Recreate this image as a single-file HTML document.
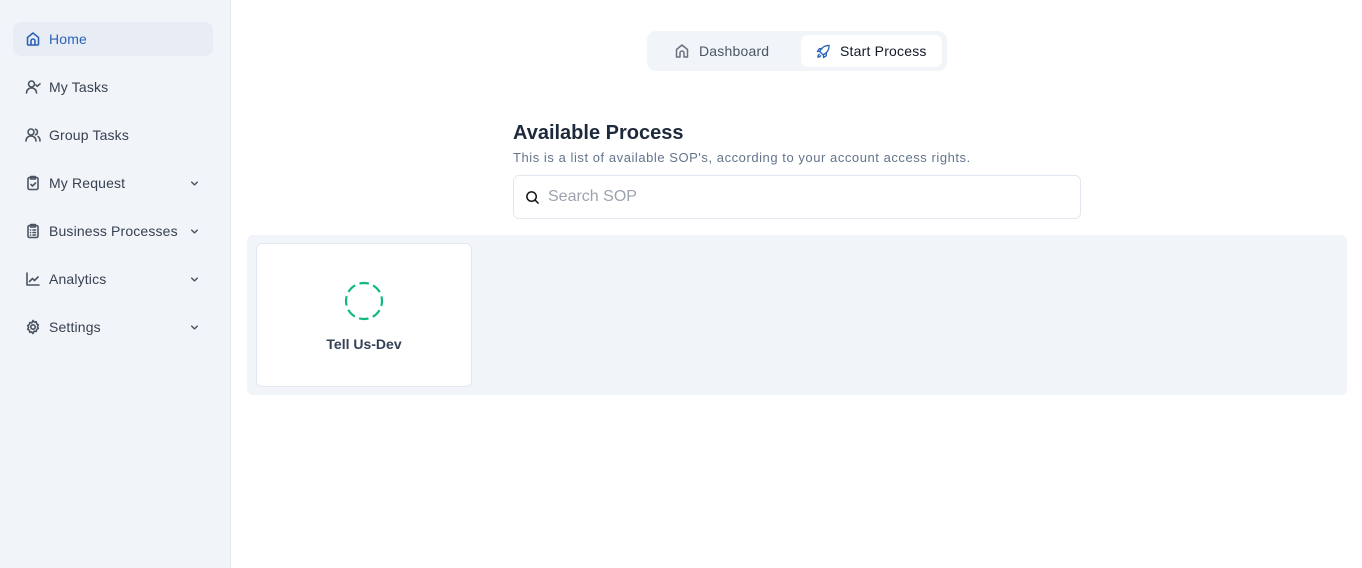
<!DOCTYPE html>
<html><head><style>
*{box-sizing:border-box;margin:0;padding:0}
body{width:1362px;height:568px;background:#fff;font-family:"Liberation Sans",sans-serif;position:relative;overflow:hidden}
.sb{position:absolute;left:0;top:0;width:231px;height:568px;background:#f1f4f9;border-right:1px solid #e2e8f0}
.it{position:absolute;left:13px;width:200px;height:34px;border-radius:8px;display:flex;align-items:center;padding-left:12px;font-size:14px;color:#374151;font-weight:500;letter-spacing:.15px}
.it svg{width:16px;height:16px;margin-right:8px;fill:none;stroke:#4b5563;stroke-width:1.6;stroke-linecap:round;stroke-linejoin:round}
.it.act{background:#e8edf5;color:#2b62b8}
.it.act svg{stroke:#2b62b8}
.it svg.chev{position:absolute;left:177px;top:13px;width:9px;height:9px;margin:0;stroke-width:1.3}
.abs{position:absolute}
</style></head><body>
<div class="sb">
<div class="it act" style="top:22px"><svg viewBox="0 0 16 16"><path d="M2.5 6.5L8 2l5.5 4.5V13a1 1 0 0 1-1 1h-9a1 1 0 0 1-1-1z"/><path d="M6 14v-4a2 2 0 0 1 4 0v4"/></svg>Home</div>
<div class="it" style="top:70px"><svg viewBox="0 0 16 16"><circle cx="6.5" cy="5" r="3"/><path d="M1.5 14c0-3 2.2-5 5-5s5 2 5 5"/><path d="M11 6l1.3 1.3L15 4.8"/></svg>My Tasks</div>
<div class="it" style="top:118px"><svg viewBox="0 0 16 16"><circle cx="6" cy="5" r="3"/><path d="M1 14c0-3 2.2-5 5-5s5 2 5 5"/><path d="M10.5 2.2a3 3 0 0 1 0 5.6M13 9.5c1.3.8 2 2.5 2 4.5"/></svg>Group Tasks</div>
<div class="it" style="top:166px"><svg viewBox="0 0 16 16"><rect x="3" y="2.5" width="10" height="12" rx="1.5"/><rect x="5.5" y="1.5" width="5" height="2.5" rx=".5"/><path d="M6 9.5l1.5 1.5L10.5 8"/></svg>My Request<svg class="chev" viewBox="0 0 8 8"><path d="M1.5 2.8L4 5.2l2.5-2.4"/></svg></div>
<div class="it" style="top:214px"><svg viewBox="0 0 16 16"><rect x="3" y="2.5" width="10" height="12" rx="1.5"/><rect x="5.5" y="1.5" width="5" height="2.5" rx=".5"/><path d="M5.5 7h.1M5.5 9.5h.1M5.5 12h.1M8 7h2.5M8 9.5h2.5M8 12h2.5"/></svg>Business Processes<svg class="chev" viewBox="0 0 8 8"><path d="M1.5 2.8L4 5.2l2.5-2.4"/></svg></div>
<div class="it" style="top:262px"><svg viewBox="0 0 16 16"><path d="M2 2v12h12"/><path d="M4.5 10.5l3-3 2 2 3.5-3.5"/></svg>Analytics<svg class="chev" viewBox="0 0 8 8"><path d="M1.5 2.8L4 5.2l2.5-2.4"/></svg></div>
<div class="it" style="top:310px"><svg viewBox="0 0 16 16"><circle cx="8" cy="8" r="2.2"/><path d="M8 1.5l1.2 1.6 2-.4.4 2 1.7 1.1-.9 1.8.9 1.8-1.7 1.1-.4 2-2-.4L8 14.5l-1.2-1.6-2 .4-.4-2-1.7-1.1.9-1.8-.9-1.8 1.7-1.1.4-2 2 .4z"/></svg>Settings<svg class="chev" viewBox="0 0 8 8"><path d="M1.5 2.8L4 5.2l2.5-2.4"/></svg></div>
</div>

<div class="abs" style="left:647px;top:31px;width:300px;height:40px;background:#f1f4f9;border-radius:9px"></div>
<div class="abs" style="left:674px;top:43px;display:flex;align-items:center;font-size:14px;color:#4b5563;font-weight:500;letter-spacing:.2px"><svg width="16" height="16" viewBox="0 0 16 16" fill="none" stroke="#6b7280" stroke-width="1.5" stroke-linejoin="round" style="margin-right:9px"><path d="M2.5 6.5L8 2l5.5 4.5V14h-3.5v-4a2 2 0 0 0-4 0v4H2.5z"/></svg>Dashboard</div>
<div class="abs" style="left:801px;top:35px;width:141px;height:32px;background:#fff;border-radius:7px;display:flex;align-items:center;padding-left:15px;font-size:14px;color:#111827;font-weight:500;letter-spacing:.2px"><svg width="15" height="15" viewBox="0 0 16 16" fill="none" stroke="#2b62b8" stroke-width="1.4" stroke-linecap="round" stroke-linejoin="round" style="margin-right:9px"><path d="M6 10l-2-2c1-3 4.5-6.5 10-6.5 0 5.5-3.5 9-6.5 10z"/><path d="M4 8H1.5l2-3h3M8 12v2.5l3-2v-3"/><path d="M3.5 11c-1 .5-1.5 2-1.5 3 1 0 2.5-.5 3-1.5"/></svg>Start Process</div>

<div class="abs" style="left:513px;top:122px;font-size:20px;font-weight:700;color:#1e293b">Available Process</div>
<div class="abs" style="left:513px;top:150px;font-size:13px;color:#64748b;letter-spacing:.55px">This is a list of available SOP's, according to your account access rights.</div>
<div class="abs" style="left:513px;top:175px;width:568px;height:44px;border:1px solid #e2e8f0;border-radius:6px;display:flex;align-items:center;padding-left:11px;font-size:16px;color:#9ca3af"><svg width="15" height="15" viewBox="0 0 16 16" fill="none" stroke="#111" stroke-width="1.6" stroke-linecap="round" style="margin-right:8px"><circle cx="7" cy="7" r="5"/><path d="M11 11l3 3"/></svg>Search SOP</div>

<div class="abs" style="left:247px;top:235px;width:1100px;height:160px;background:#f1f4f9;border-radius:6px"></div>
<div class="abs" style="left:256px;top:243px;width:216px;height:144px;background:#fff;border:1px solid #e2e8f0;border-radius:6px"></div>
<svg class="abs" style="left:344px;top:281px" width="40" height="40" viewBox="0 0 40 40"><circle cx="20" cy="20" r="18" fill="none" stroke="#10b981" stroke-width="2.2" stroke-dasharray="9.5 4.6" stroke-dashoffset="4.5"/></svg>
<div class="abs" style="left:256px;top:336px;width:216px;text-align:center;font-size:14px;font-weight:700;color:#334155">Tell Us-Dev</div>
</body></html>
